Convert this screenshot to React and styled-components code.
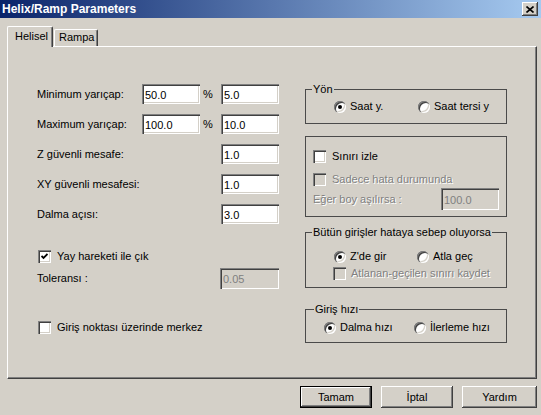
import React from 'react'
import styled, { createGlobalStyle } from 'styled-components'

const GlobalStyle = createGlobalStyle`
  html, body {
    margin: 0;
    padding: 0;
    background: #d4d0c8;
  }
  body {
    font-family: 'Liberation Sans', Arial, sans-serif;
    font-size: 11px;
    color: #000;
  }
`

const sunken = `
  box-shadow: inset 1px 1px #808080, inset 2px 2px #404040,
    inset -1px -1px #ffffff, inset -2px -2px #d4d0c8;
`

const raised = `
  box-shadow: inset -1px -1px #404040, inset 1px 1px #ffffff,
    inset -2px -2px #808080, inset 2px 2px #d4d0c8;
`

const Checkbox = ({ checked, disabled }) => (
  <CheckBox $disabled={disabled}>
    {checked && (
      <svg width="7" height="7" viewBox="0 0 7 7">
        <polyline points="0.5,3 2.5,5 6.5,1" fill="none" stroke="#000" strokeWidth="1.8" />
      </svg>
    )}
  </CheckBox>
)

const Radio = ({ checked }) => <RadioDot $checked={checked} />

const App = () => (
  <>
    <GlobalStyle />
    <Window>
      <TitleBar>
        <Title>Helix/Ramp Parameters</Title>
        <CloseButton>
          <svg width="8" height="7" viewBox="0 0 8 7">
            <path d="M0.5 0.5 L7.5 6.5 M7.5 0.5 L0.5 6.5" stroke="#000" strokeWidth="1.6" />
          </svg>
        </CloseButton>
      </TitleBar>
      <Body>
        <TabStrip>
          <Tab $active>Helisel</Tab>
          <Tab>Rampa</Tab>
        </TabStrip>
        <Panel>
          <LeftColumn>
            <FieldGrid>
              <Label>Minimum yarıçap:</Label>
              <Input $w={58} readOnly value="50.0" />
              <Percent>%</Percent>
              <Input $w={58} readOnly value="5.0" />

              <Label>Maximum yarıçap:</Label>
              <Input $w={58} readOnly value="100.0" />
              <Percent>%</Percent>
              <Input $w={58} readOnly value="10.0" />

              <WideLabel>Z güvenli mesafe:</WideLabel>
              <Input $w={58} readOnly value="1.0" />

              <WideLabel>XY güvenli mesafesi:</WideLabel>
              <Input $w={58} readOnly value="1.0" />

              <WideLabel>Dalma açısı:</WideLabel>
              <Input $w={58} readOnly value="3.0" />
            </FieldGrid>

            <CheckRow $mt={26} $ml={1}>
              <Checkbox checked />
              <span>Yay hareketi ile çık</span>
            </CheckRow>
            <SplitRow $mt={5} $h={21}>
              <Label>Toleransı :</Label>
              <Input $w={59} $h={21} disabled readOnly value="0.05" />
            </SplitRow>
            <CheckRow $mt={32} $ml={1}>
              <Checkbox />
              <span>Giriş noktası üzerinde merkez</span>
            </CheckRow>
          </LeftColumn>

          <RightColumn>
            <GroupBox $mt={6} $pad="10px 0 10px 28px">
              <Legend>Yön</Legend>
              <RadioRow>
                <RadioItem $w={84}>
                  <Radio checked />
                  <span>Saat y.</span>
                </RadioItem>
                <RadioItem>
                  <Radio />
                  <span>Saat tersi y</span>
                </RadioItem>
              </RadioRow>
            </GroupBox>

            <GroupBox $mt={12} $pad="13px 7px 6px 7px">
              <CheckRow>
                <Checkbox />
                <span>Sınırı izle</span>
              </CheckRow>
              <CheckRow $mt={10}>
                <Checkbox disabled />
                <Muted>Sadece hata durumunda</Muted>
              </CheckRow>
              <SplitRow $mt={2} $h={22}>
                <Muted>Eğer boy aşılırsa :</Muted>
                <Input $w={58} $h={22} disabled readOnly value="100.0" />
              </SplitRow>
            </GroupBox>

            <GroupBox $mt={15} $pad="17px 0 7px 28px">
              <Legend>Bütün girişler hataya sebep oluyorsa</Legend>
              <RadioRow>
                <RadioItem $w={83}>
                  <Radio checked />
                  <span>Z'de gir</span>
                </RadioItem>
                <RadioItem>
                  <Radio />
                  <span>Atla geç</span>
                </RadioItem>
              </RadioRow>
              <CheckRow $mt={4} $ml={-1} $gap={5}>
                <Checkbox disabled />
                <Muted>Atlanan-geçilen sınırı kaydet</Muted>
              </CheckRow>
            </GroupBox>

            <GroupBox $mt={21} $pad="11px 0 8px 18px">
              <Legend $left={8}>Giriş hızı</Legend>
              <RadioRow>
                <RadioItem $w={90}>
                  <Radio checked />
                  <span>Dalma hızı</span>
                </RadioItem>
                <RadioItem>
                  <Radio />
                  <span>İlerleme hızı</span>
                </RadioItem>
              </RadioRow>
            </GroupBox>
          </RightColumn>
        </Panel>
        <Footer>
          <Button $default>Tamam</Button>
          <Button>İptal</Button>
          <Button $w={75}>Yardım</Button>
        </Footer>
      </Body>
    </Window>
  </>
)

export default App

const Window = styled.div`
  width: 541px;
  height: 415px;
  display: flex;
  flex-direction: column;
  background: #d4d0c8;
  overflow: hidden;
`

const TitleBar = styled.div`
  height: 18px;
  flex: none;
  display: flex;
  align-items: center;
  justify-content: space-between;
  padding: 0 3px 0 2px;
  box-sizing: border-box;
  background: linear-gradient(to right, #0a246a, #a6caf0);
`

const Title = styled.span`
  color: #fff;
  font-weight: bold;
  font-size: 12px;
  line-height: 14px;
`

const CloseButton = styled.div`
  width: 16px;
  height: 14px;
  display: flex;
  align-items: center;
  justify-content: center;
  background: #d4d0c8;
  ${raised}
`

const Body = styled.div`
  flex: 1;
  display: flex;
  flex-direction: column;
  padding: 8px 4px 0 7px;
`

const TabStrip = styled.div`
  height: 20px;
  display: flex;
  align-items: flex-start;
  position: relative;
  z-index: 1;
`

const Tab = styled.div`
  box-sizing: border-box;
  width: ${(p) => (p.$active ? 46 : 44)}px;
  height: ${(p) => (p.$active ? 21 : 17)}px;
  margin-top: ${(p) => (p.$active ? 0 : 3)}px;
  padding: ${(p) => (p.$active ? '3px 0 0 7px' : '1px 0 0 4px')};
  line-height: 13px;
  background: #d4d0c8;
  border-top: 1px solid #fff;
  border-left: 1px solid #fff;
  border-right: 1px solid #404040;
  border-radius: 2px 2px 0 0;
  box-shadow: inset -1px 0 #808080;
  margin-left: ${(p) => (p.$active ? 0 : 1)}px;
`

const Panel = styled.div`
  box-sizing: border-box;
  width: 530px;
  height: 333px;
  display: flex;
  justify-content: space-between;
  padding: 36px 29px 0 29px;
  border-top: 1px solid #fff;
  border-left: 1px solid #fff;
  border-right: 1px solid #404040;
  border-bottom: 1px solid #404040;
  box-shadow: inset -1px -1px #808080;
`

const LeftColumn = styled.div`
  width: 242px;
  padding-top: 1px;
  display: flex;
  flex-direction: column;
`

const FieldGrid = styled.div`
  display: grid;
  grid-template-columns: 105px 58px 21px 58px;
  grid-auto-rows: 20px;
  row-gap: 10px;
  align-items: center;
`

const Label = styled.span`
  line-height: 13px;
  white-space: nowrap;
`

const WideLabel = styled(Label)`
  grid-column: 1 / 4;
`

const Percent = styled.span`
  padding-left: 3px;
  line-height: 13px;
`

const Input = styled.input`
  box-sizing: border-box;
  width: ${(p) => p.$w}px;
  height: ${(p) => p.$h || 20}px;
  margin: 0;
  border: none;
  outline: none;
  padding: 1px 3px 0 3px;
  font-family: inherit;
  font-size: 11px;
  color: ${(p) => (p.disabled ? '#808080' : '#000')};
  -webkit-text-fill-color: ${(p) => (p.disabled ? '#808080' : '#000')};
  opacity: 1;
  background: ${(p) => (p.disabled ? '#d4d0c8' : '#fff')};
  ${sunken}
`

const CheckRow = styled.div`
  display: flex;
  align-items: center;
  gap: ${(p) => p.$gap || 6}px;
  height: 13px;
  line-height: 13px;
  margin-top: ${(p) => p.$mt || 0}px;
  margin-left: ${(p) => p.$ml || 0}px;
  white-space: nowrap;
`

const SplitRow = styled.div`
  display: flex;
  align-items: center;
  justify-content: space-between;
  height: ${(p) => p.$h}px;
  margin-top: ${(p) => p.$mt || 0}px;
`

const CheckBox = styled.span`
  box-sizing: border-box;
  width: 13px;
  height: 13px;
  flex: none;
  display: flex;
  align-items: center;
  justify-content: center;
  background: ${(p) => (p.$disabled ? '#d4d0c8' : '#fff')};
  ${sunken}
`

const Muted = styled.span`
  color: #808080;
  text-shadow: 1px 1px 0 #fff;
  line-height: 13px;
  white-space: nowrap;
`

const RightColumn = styled.div`
  width: 202px;
  display: flex;
  flex-direction: column;
`

const GroupBox = styled.div`
  position: relative;
  margin-top: ${(p) => p.$mt}px;
  padding: ${(p) => p.$pad};
  border: 1px solid #4a4a4a;
`

const Legend = styled.span`
  position: absolute;
  top: -7px;
  left: ${(p) => p.$left || 6}px;
  padding: 0 1px;
  line-height: 13px;
  background: #d4d0c8;
  white-space: nowrap;
`

const RadioRow = styled.div`
  display: flex;
  height: 13px;
  align-items: center;
`

const RadioItem = styled.div`
  display: flex;
  align-items: center;
  gap: 4px;
  width: ${(p) => (p.$w ? `${p.$w}px` : 'auto')};
  line-height: 13px;
  white-space: nowrap;
`

const RadioDot = styled.span`
  box-sizing: border-box;
  width: 12px;
  height: 12px;
  flex: none;
  border-radius: 50%;
  background: #fff;
  display: flex;
  align-items: center;
  justify-content: center;
  box-shadow: inset 1px 1px #808080, inset 2px 2px #404040,
    inset -1px -1px #ffffff, inset -2px -2px #d4d0c8;

  &::after {
    content: '';
    display: ${(p) => (p.$checked ? 'block' : 'none')};
    width: 4px;
    height: 4px;
    border-radius: 50%;
    background: #000;
  }
`

const Footer = styled.div`
  display: flex;
  justify-content: flex-end;
  gap: 9px;
  margin-top: 7px;
`

const Button = styled.div`
  box-sizing: border-box;
  width: ${(p) => p.$w || 72}px;
  height: 22px;
  display: flex;
  align-items: center;
  justify-content: center;
  background: #d4d0c8;
  border: ${(p) => (p.$default ? '1px solid #000' : 'none')};
  ${raised}
`
